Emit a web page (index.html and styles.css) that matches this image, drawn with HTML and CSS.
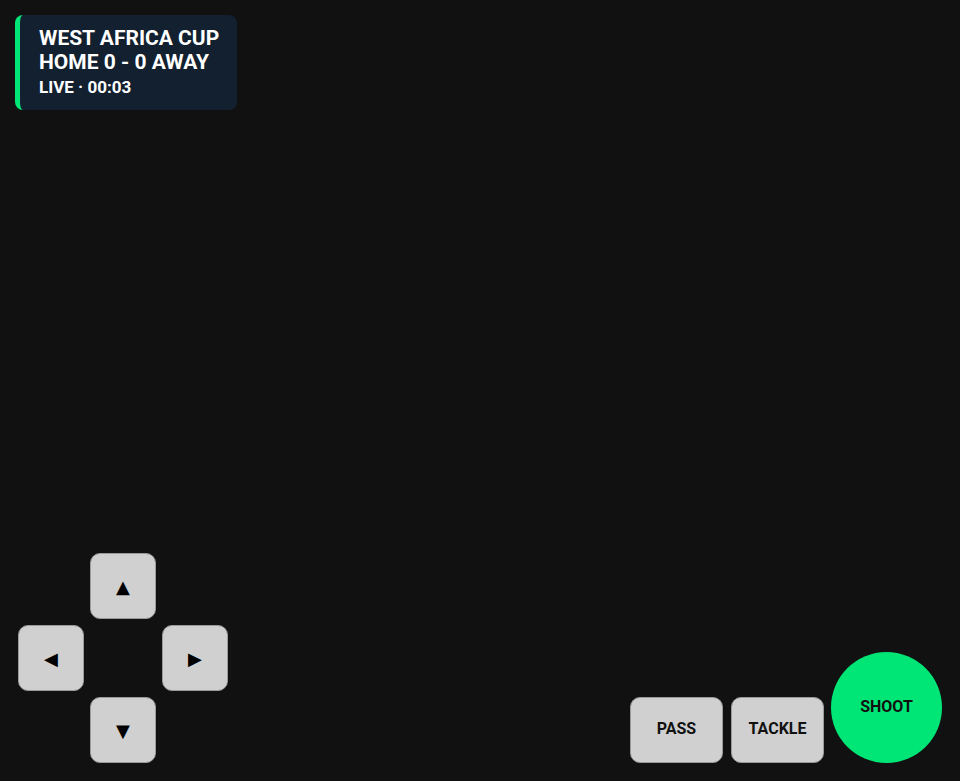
FILE: index.html
```html
<!DOCTYPE html>
<html>
<head>
<meta charset="utf-8">
<link rel="stylesheet" href="styles.css">
</head>
<body>
<div class="screen">
  <div class="hud">
    <div class="hud-title">WEST AFRICA CUP</div>
    <div class="hud-score">HOME 0 - 0 AWAY</div>
    <div class="hud-time">LIVE · 00:03</div>
  </div>
  <div class="controls">
    <div class="dpad">
      <button class="key up">▲</button>
      <button class="key left">◀</button>
      <button class="key right">▶</button>
      <button class="key down">▼</button>
    </div>
    <div class="actions">
      <button class="act">PASS</button>
      <button class="act">TACKLE</button>
      <button class="shoot">SHOOT</button>
    </div>
  </div>
</div>
</body>
</html>
```

FILE: styles.css
```css
html, body {
  margin: 0;
  padding: 0;
  background: #111111;
  font-family: Roboto, "Liberation Sans", sans-serif;
}
.screen {
  width: 960px;
  height: 781px;
  box-sizing: border-box;
  padding: 15px 18px 18px 15px;
  display: flex;
  flex-direction: column;
  justify-content: space-between;
}
.hud {
  align-self: flex-start;
  width: 222px;
  height: 95px;
  box-sizing: border-box;
  background: #12202f;
  border-left: 5px solid #00e676;
  border-radius: 8px;
  padding: 11px 10px 0 19px;
  color: #ffffff;
  font-weight: 700;
}
.hud-title, .hud-score {
  font-size: 21px;
  line-height: 24px;
}
.hud-time {
  font-size: 17px;
  line-height: 20px;
  margin-top: 3px;
}
.controls {
  display: flex;
  justify-content: space-between;
  align-items: flex-end;
  padding-left: 3px;
}
.dpad {
  display: grid;
  grid-template-columns: 66px 66px 66px;
  grid-template-rows: 66px 66px 66px;
  gap: 6px;
}
.key {
  box-sizing: border-box;
  background: #d0d0d0;
  border: 1px solid #9a9a9a;
  border-radius: 10px;
  font-size: 18px;
  color: #000;
  padding: 0;
  font-family: "DejaVu Sans", sans-serif;
}
.up { grid-column: 2; grid-row: 1; }
.left { grid-column: 1; grid-row: 2; }
.right { grid-column: 3; grid-row: 2; }
.down { grid-column: 2; grid-row: 3; }
.actions {
  display: flex;
  align-items: flex-end;
  gap: 8px;
}
.act {
  width: 93px;
  height: 66px;
  box-sizing: border-box;
  background: #d0d0d0;
  border: 1px solid #9a9a9a;
  border-radius: 10px;
  font-family: Roboto, "Liberation Sans", sans-serif;
  font-weight: 700;
  font-size: 16px;
  color: #111;
  padding: 0 0 4px 0;
}
.shoot {
  width: 111px;
  height: 111px;
  margin-left: -1px;
  box-sizing: border-box;
  border-radius: 50%;
  border: none;
  background: #00e676;
  font-family: Roboto, "Liberation Sans", sans-serif;
  font-weight: 700;
  font-size: 16px;
  color: #111;
  padding: 0 0 2px 0;
}
```
